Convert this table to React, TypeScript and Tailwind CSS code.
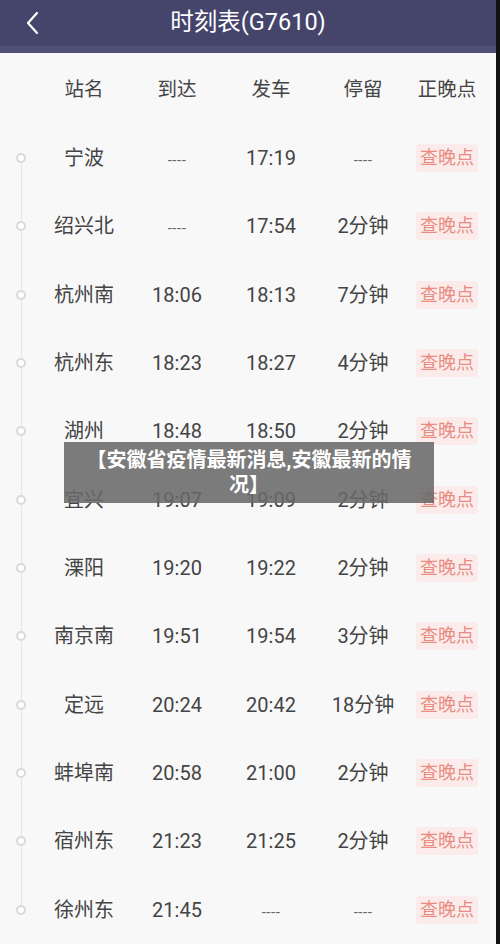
import React from "react";

type Row = { name: string; arr: string; dep: string; stop: string };

const rows: Row[] = [
  { name: "宁波", arr: "----", dep: "17:19", stop: "----" },
  { name: "绍兴北", arr: "----", dep: "17:54", stop: "2分钟" },
  { name: "杭州南", arr: "18:06", dep: "18:13", stop: "7分钟" },
  { name: "杭州东", arr: "18:23", dep: "18:27", stop: "4分钟" },
  { name: "湖州", arr: "18:48", dep: "18:50", stop: "2分钟" },
  { name: "宜兴", arr: "19:07", dep: "19:09", stop: "2分钟" },
  { name: "溧阳", arr: "19:20", dep: "19:22", stop: "2分钟" },
  { name: "南京南", arr: "19:51", dep: "19:54", stop: "3分钟" },
  { name: "定远", arr: "20:24", dep: "20:42", stop: "18分钟" },
  { name: "蚌埠南", arr: "20:58", dep: "21:00", stop: "2分钟" },
  { name: "宿州东", arr: "21:23", dep: "21:25", stop: "2分钟" },
  { name: "徐州东", arr: "21:45", dep: "----", stop: "----" },
];

function Cell({ v }: { v: string }) {
  if (v === "----")
    return <span className="text-[15px] tracking-[0.5px] text-[#666]">----</span>;
  return <span>{v}</span>;
}

export default function App() {
  return (
    <div
      className="relative flex h-[944px] w-[500px] overflow-hidden bg-[#f8f8f9] text-[#444]"
      style={{ fontFamily: 'Roboto, "Noto Sans CJK SC", sans-serif' }}
    >
      <div className="flex w-[496px] flex-col">
        <div className="flex h-[53px] flex-col bg-[#45456b]">
          <div className="relative flex h-[46px] items-center justify-center">
            <svg
              className="absolute left-[25px] top-[11px]"
              width="14"
              height="24"
              viewBox="0 0 14 24"
              fill="none"
              stroke="white"
              strokeWidth="2.2"
              strokeLinecap="round"
              strokeLinejoin="round"
            >
              <path d="M12 2 L3 12 L12 22" />
            </svg>
            <span className="text-[23.5px] text-white">时刻表(G7610)</span>
          </div>
          <div className="h-[7px] bg-[#505076]" />
        </div>

        <div className="flex h-[71px] items-center pt-[2px] text-[19.5px] text-[#444]">
          <div className="w-[42px]" />
          <div className="w-[84px] text-center">站名</div>
          <div className="w-[102px] text-center">到达</div>
          <div className="w-[86px] text-center">发车</div>
          <div className="w-[98px] text-center">停留</div>
          <div className="w-[70px] text-center">正晚点</div>
        </div>

        {rows.map((r, i) => (
          <div key={i} className="flex h-[68.7px] items-center text-[20px]">
            <div className="flex h-full w-[42px] flex-col items-center">
              <div className={`w-px flex-1 ${i === 0 ? "" : "bg-[#e6e6e8]"}`} />
              <div className="h-[10px] w-[10px] rounded-full border-2 border-[#d9d9dc] bg-white" />
              <div className={`w-px flex-1 ${i === rows.length - 1 ? "" : "bg-[#e6e6e8]"}`} />
            </div>
            <div className="w-[84px] text-center">{r.name}</div>
            <div className="w-[102px] text-center">
              <Cell v={r.arr} />
            </div>
            <div className="w-[86px] text-center">
              <Cell v={r.dep} />
            </div>
            <div className="w-[98px] text-center">
              <Cell v={r.stop} />
            </div>
            <div className="flex w-[70px] justify-center">
              <span className="rounded-[3px] bg-[#fbeceb] px-[4px] py-[3px] text-[18px] leading-[22px] text-[#e98d82]">
                查晚点
              </span>
            </div>
          </div>
        ))}
      </div>
      <div className="w-[4px] bg-[#111]" />

      <div className="absolute left-[64px] top-[442px] flex h-[61px] w-[370px] items-center justify-center bg-[rgba(105,105,105,0.88)] px-[10px]">
        <p className="text-center text-[20px] font-bold leading-[25px] text-white">
          【安徽省疫情最新消息,安徽最新的情
          <br />
          况】
        </p>
      </div>
    </div>
  );
}
